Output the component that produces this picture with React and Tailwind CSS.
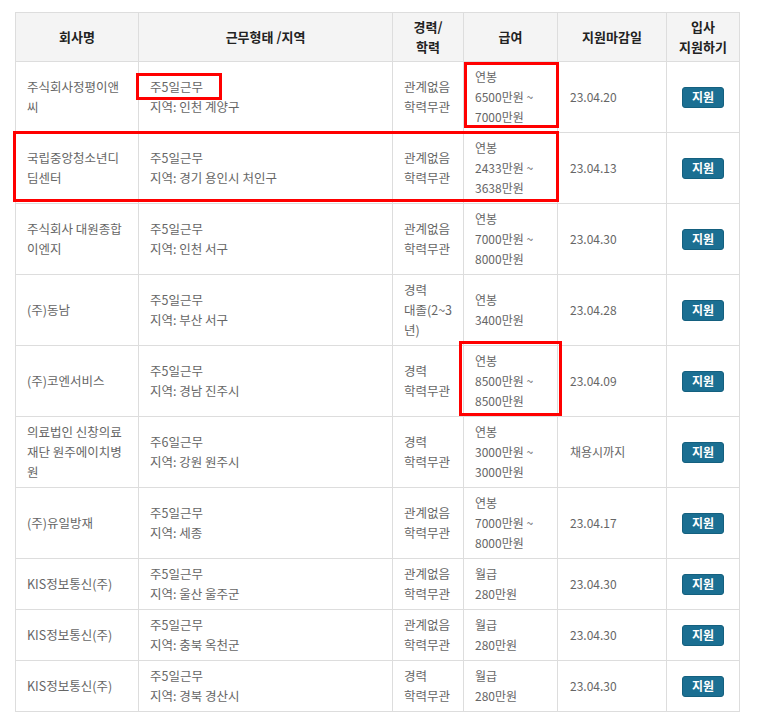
import React from "react";

const rows = [
  { c: ["주식회사정평이앤", "씨"], w: ["주5일근무", "지역: 인천 계양구"], e: ["관계없음", "학력무관"], s: ["연봉", "6500만원 ~", "7000만원"], d: "23.04.20" },
  { c: ["국립중앙청소년디", "딤센터"], w: ["주5일근무", "지역: 경기 용인시 처인구"], e: ["관계없음", "학력무관"], s: ["연봉", "2433만원 ~", "3638만원"], d: "23.04.13" },
  { c: ["주식회사 대원종합", "이엔지"], w: ["주5일근무", "지역: 인천 서구"], e: ["관계없음", "학력무관"], s: ["연봉", "7000만원 ~", "8000만원"], d: "23.04.30" },
  { c: ["(주)동남"], w: ["주5일근무", "지역: 부산 서구"], e: ["경력", "대졸(2~3", "년)"], s: ["연봉", "3400만원"], d: "23.04.28" },
  { c: ["(주)코엔서비스"], w: ["주5일근무", "지역: 경남 진주시"], e: ["경력", "학력무관"], s: ["연봉", "8500만원 ~", "8500만원"], d: "23.04.09" },
  { c: ["의료법인 신창의료", "재단 원주에이치병", "원"], w: ["주6일근무", "지역: 강원 원주시"], e: ["경력", "학력무관"], s: ["연봉", "3000만원 ~", "3000만원"], d: "채용시까지" },
  { c: ["(주)유일방재"], w: ["주5일근무", "지역: 세종"], e: ["관계없음", "학력무관"], s: ["연봉", "7000만원 ~", "8000만원"], d: "23.04.17" },
  { c: ["KIS정보통신(주)"], w: ["주5일근무", "지역: 울산 울주군"], e: ["관계없음", "학력무관"], s: ["월급", "280만원"], d: "23.04.30" },
  { c: ["KIS정보통신(주)"], w: ["주5일근무", "지역: 충북 옥천군"], e: ["관계없음", "학력무관"], s: ["월급", "280만원"], d: "23.04.30" },
  { c: ["KIS정보통신(주)"], w: ["주5일근무", "지역: 경북 경산시"], e: ["경력", "학력무관"], s: ["월급", "280만원"], d: "23.04.30" },
];

function Lines({ lines }) {
  return (
    <>
      {lines.map((l, i) => (
        <div key={i} className="whitespace-pre">
          {l}
        </div>
      ))}
    </>
  );
}

const td = "border border-[#dddddd] pl-[11px] pr-[4px] py-[5px] align-middle text-left";
const th = "border border-[#dddddd] py-[4px] align-middle text-center font-bold text-[13px] text-[#222222]";

export default function App() {
  return (
    <div
      className="relative w-[760px] h-[725px] bg-white pt-[12px] pl-[15px]"
      style={{ fontFamily: '"Noto Sans CJK KR", "Noto Sans", sans-serif' }}
    >
      <table className="border-collapse table-fixed w-[724px] text-[12.5px] leading-[20px] text-[#666666]">
        <colgroup>
          <col className="w-[123px]" />
          <col className="w-[254px]" />
          <col className="w-[71px]" />
          <col className="w-[94px]" />
          <col className="w-[109px]" />
          <col className="w-[73px]" />
        </colgroup>
        <thead>
          <tr className="bg-[#f4f4f4] h-[49px]">
            <th className={th}>회사명</th>
            <th className={th}>근무형태 /지역</th>
            <th className={th}>
              <div>경력/</div>
              <div>학력</div>
            </th>
            <th className={th}>급여</th>
            <th className={th}>지원마감일</th>
            <th className={th}>
              <div>입사</div>
              <div>지원하기</div>
            </th>
          </tr>
        </thead>
        <tbody>
          {rows.map((r, i) => (
            <tr key={i} className={r.s.length === 3 || r.e.length === 3 || r.c.length === 3 ? "h-[71px]" : "h-[51px]"}>
              <td className={td}>
                <Lines lines={r.c} />
              </td>
              <td className={td}>
                <Lines lines={r.w} />
              </td>
              <td className={td}>
                <Lines lines={r.e} />
              </td>
              <td className={td + " text-[12px]"}>
                <Lines lines={r.s} />
              </td>
              <td className={td + " !pl-[12px] text-[12px]"}>{r.d}</td>
              <td className="border border-[#dddddd] align-middle text-center">
                <button className="inline-flex items-center justify-center w-[42px] h-[21px] rounded-[3px] bg-[#1b6f92] border border-[#14607f] text-white font-bold text-[12px] leading-none">
                  지원
                </button>
              </td>
            </tr>
          ))}
        </tbody>
      </table>

      <div className="absolute left-[136px] top-[73px] w-[86px] h-[27px] border-[3px] border-[#ff0000]" />
      <div className="absolute left-[464px] top-[62px] w-[95px] h-[66px] border-[3px] border-[#ff0000]" />
      <div className="absolute left-[13px] top-[131px] w-[546px] h-[71px] border-[3px] border-[#ff0000]" />
      <div className="absolute left-[459px] top-[341px] w-[103px] h-[75px] border-[3px] border-[#ff0000]" />
    </div>
  );
}
